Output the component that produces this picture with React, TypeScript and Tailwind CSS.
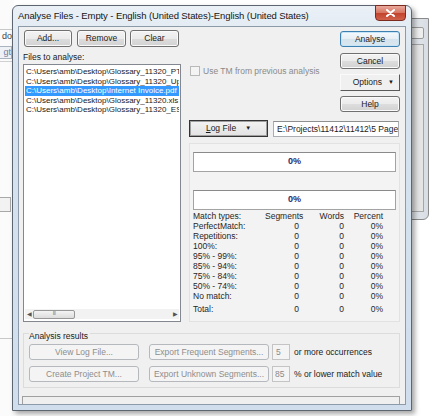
import React from "react";
import clsx from "clsx";

const font = "font-['Liberation_Sans',Arial,sans-serif]";

const files = [
  "C:\\Users\\amb\\Desktop\\Glossary_11320_PT.xlsx",
  "C:\\Users\\amb\\Desktop\\Glossary_11320_Upd.xlsx",
  "C:\\Users\\amb\\Desktop\\Internet Invoice.pdf",
  "C:\\Users\\amb\\Desktop\\Glossary_11320.xls",
  "C:\\Users\\amb\\Desktop\\Glossary_11320_ES.xlsx",
];

const rows = [
  "PerfectMatch:",
  "Repetitions:",
  "100%:",
  "95% - 99%:",
  "85% - 94%:",
  "75% - 84%:",
  "50% - 74%:",
  "No match:",
];

const Btn = ({
  children,
  className,
  disabled,
  primary,
}: {
  children: React.ReactNode;
  className?: string;
  disabled?: boolean;
  primary?: boolean;
}) => (
  <div
    className={clsx(
      "flex items-center justify-center rounded-[3px] border text-[8.5px] leading-none shrink-0",
      disabled
        ? "border-[#b5b9bd] bg-[#f4f4f4] text-[#8d8d8d]"
        : primary
          ? "border-[#3c7fb1] bg-[linear-gradient(#f4f9fc,#e6eff5_50%,#d5e3ec_50%,#d9e6ee)] text-[#1a1a1a] shadow-[inset_0_0_0_1px_#c6e4f7]"
          : "border-[#707070] bg-[linear-gradient(#f3f3f3,#ebebeb_50%,#dddddd_50%,#d2d2d2)] text-[#1a1a1a] shadow-[inset_0_0_0_1px_#fafafa]",
      className
    )}
  >
    {children}
  </div>
);

const Progress = () => (
  <div className="h-[20px] border border-[#a3a3a3] border-t-[#8a8a8a] bg-white flex items-center justify-center text-[9px] font-bold text-[#2b2b6b]">
    0%
  </div>
);

export default function App() {
  return (
    <div className={clsx("relative w-[433px] h-[416px] overflow-hidden bg-white text-[#1a1a1a]", font)}>
      {/* window behind, left */}
      <div className="absolute left-0 top-0 w-[14px] h-[416px] bg-[#fbfbfb] overflow-hidden">
        <div className="absolute left-0 top-[29px] w-[14px] border-t border-[#c8c8c8]" />
        <div className="absolute left-0 top-[31px] w-[12px] overflow-hidden text-[9px] leading-[11px] text-[#444] flex justify-end">
          <span className="shrink-0">do</span>
        </div>
        <div className="absolute left-0 top-[46px] w-[12px] h-[13px] border border-l-0 border-[#aab4c0] bg-[#eef2f7] overflow-hidden flex justify-end">
          <span className="shrink-0 text-[9px] leading-[11px] text-[#6a7fa3]">gt</span>
        </div>
        <div className="absolute left-0 top-[61px] w-[14px] border-t border-[#d0d0d0]" />
        <div className="absolute left-0 top-[197px] w-[11px] h-[15px] border border-l-0 border-[#a8a8a8] bg-[#f2f2f2]" />
        <div className="absolute left-0 top-[338px] w-[14px] border-t border-[#c8c8c8]" />
      </div>

      {/* window behind, right */}
      <div className="absolute left-[405px] top-[18px] w-[24px] h-[202px] rounded-br-[6px] border border-[#8a8a8a] bg-[linear-gradient(90deg,#e9edf1,#d7dde3)]">
        <div className="absolute left-[4px] top-[8px] w-[14px] h-[12px] rounded-[2px] border border-[#9a9a9a] bg-[#eeeeee]" />
        <div className="absolute left-[4px] top-[25px] w-[14px] h-[168px] border border-[#a6a6a6] bg-[#e4e4e4]" />
      </div>

      {/* dialog */}
      <div className="absolute left-[12px] top-[5px] w-[400px] h-[406px] rounded-t-[6px] border border-[#5d6670] bg-[linear-gradient(#eaf0f6,#d7e3ef_60px,#cfdded)] shadow-[3px_3px_5px_rgba(0,0,0,0.35)] flex flex-col">
        <div className="h-[20px] flex items-center pl-[5px] relative shrink-0">
          <span className="text-[9.5px] text-[#151515] tracking-[-0.1px]">
            Analyse Files - Empty - English (United States)-English (United States)
          </span>
          <div className="absolute right-[5px] top-[-1px] w-[31px] h-[16px] rounded-b-[4px] border border-[#7b2b20] bg-[linear-gradient(#e9a99c,#d5735f_50%,#c2412b_50%,#d0624b)] flex items-center justify-center">
            <svg width="9" height="8" viewBox="0 0 9 8">
              <path d="M1 1 L8 7 M8 1 L1 7" stroke="#fff" strokeWidth="2" strokeLinecap="round" />
            </svg>
          </div>
        </div>

        <div className="mx-[5px] mb-[5px] flex-1 border border-[#8d9aaa] bg-[#f0f0f0] pl-[4px] pr-[5px] pt-[3px] flex flex-col">
          <div className="flex">
            {/* left column */}
            <div className="w-[158px] flex flex-col">
              <div className="flex ml-[1px]">
                <Btn className="w-[48px] h-[17px]">Add...</Btn>
                <Btn className="w-[49px] h-[17px] ml-[5px]">Remove</Btn>
                <Btn className="w-[49px] h-[17px] ml-[4px]">Clear</Btn>
              </div>
              <div className="mt-[5px] h-[10px] text-[8.5px] leading-[10px]">Files to analyse:</div>
              <div className="mt-[2px] h-[258px] border border-[#828790] bg-white flex flex-col p-[1px]">
                <div className="flex-1 pt-[1px] overflow-hidden">
                  {files.map((f, i) => (
                    <div
                      key={f}
                      className={clsx(
                        "h-[9.5px] leading-[9.5px] text-[8px] whitespace-nowrap overflow-hidden pl-[1px]",
                        i === 2 ? "bg-[#3399ff] text-white" : "text-[#1a1a1a]"
                      )}
                    >
                      {f}
                    </div>
                  ))}
                </div>
                <div className="h-[10px] mb-[1px] flex items-center bg-[#f2f2f2]">
                  <span className="w-[8px] text-[6px] text-[#555] text-center">◀</span>
                  <div className="w-[42px] h-[9px] rounded-[2px] border border-[#979797] bg-[linear-gradient(#f4f4f4,#dcdcdc)] flex items-center justify-center text-[5px] text-[#777] tracking-[-0.5px]">
                    III
                  </div>
                  <div className="flex-1" />
                  <span className="w-[8px] text-[6px] text-[#555] text-center">▶</span>
                </div>
              </div>
            </div>

            {/* right column */}
            <div className="w-[211px] ml-[8px] flex flex-col">
              <div className="flex justify-between">
                <div className="pt-[36px] flex items-start">
                  <div className="ml-[1px] w-[10px] h-[10px] border border-[#b9b9b9] bg-[#f4f4f4]" />
                  <span className="ml-[3px] text-[8.5px] leading-[10px] text-[#8a8a8a]">
                    Use TM from previous analysis
                  </span>
                </div>
                <div className="w-[60px] pt-[1px] flex flex-col">
                  <Btn primary className="h-[16px]">Analyse</Btn>
                  <Btn className="h-[16px] mt-[6px]">Cancel</Btn>
                  <div className="h-[17px] mt-[5px] border border-t-[#fafafa] border-l-[#fafafa] border-r-[#5a5a5a] border-b-[#5a5a5a] bg-[#f0f0f0] flex items-center justify-end pr-[5px] text-[8.5px]">
                    Options
                    <span className="ml-[6px] text-[6px]">▼</span>
                  </div>
                  <Btn className="h-[16px] mt-[5px]">Help</Btn>
                </div>
              </div>

              <div className="mt-[8px] flex items-center">
                <div className="w-[79px] h-[17px] border border-[#333] shadow-[inset_0_0_0_1px_#a0a0a0] bg-[linear-gradient(#f3f3f3,#e2e2e2)] flex items-center justify-center text-[8.5px]">
                  <span>
                    <span className="underline">L</span>og File
                  </span>
                  <span className="ml-[9px] text-[6px]">▼</span>
                </div>
                <div className="ml-[5px] w-[126px] h-[16px] border border-[#abadb3] border-t-[#8e8f8f] bg-white text-[8.5px] leading-[14px] pl-[3px] whitespace-nowrap overflow-hidden">
                  E:\Projects\11412\11412\5 Pages\
                </div>
              </div>

              <div className="mt-[6px] h-[179px] border border-[#e2e2e2] bg-[#f3f3f3] px-[3px] pt-[8px]">
                <Progress />
                <div className="h-[18px]" />
                <Progress />
                <div className="mt-[1px] grid grid-cols-[72px_34px_45px_39px] text-[8.5px] leading-[10px] text-[#262626]">
                  <div>Match types:</div>
                  <div className="text-right">Segments</div>
                  <div className="text-right">Words</div>
                  <div className="text-right">Percent</div>
                  {rows.map((r) => (
                    <React.Fragment key={r}>
                      <div>{r}</div>
                      <div className="text-right">0</div>
                      <div className="text-right">0</div>
                      <div className="text-right">0%</div>
                    </React.Fragment>
                  ))}
                  <div className="mt-[3px]">Total:</div>
                  <div className="mt-[3px] text-right">0</div>
                  <div className="mt-[3px] text-right">0</div>
                  <div className="mt-[3px] text-right">0%</div>
                </div>
              </div>
            </div>
          </div>

          {/* analysis results */}
          <div className="relative mt-[11px] h-[55px] border border-[#dcdcdc] px-[5px] pt-[10px]">
            <span className="absolute left-[5px] top-[-3px] bg-[#f0f0f0] pr-[2px] text-[8.5px] leading-[10px]">
              Analysis results
            </span>
            <div className="flex items-center">
              <Btn disabled className="w-[110px] h-[16px]">View Log File...</Btn>
              <Btn disabled className="w-[120px] h-[16px] ml-[10px]">Export Frequent Segments...</Btn>
              <div className="ml-[3px] w-[18px] h-[16px] border border-[#c4c4c4] bg-[#f4f4f4] text-[8.5px] text-[#8a8a8a] leading-[14px] pl-[3px]">5</div>
              <span className="ml-[4px] text-[8.5px]">or more occurrences</span>
            </div>
            <div className="flex items-center mt-[6px]">
              <Btn disabled className="w-[110px] h-[16px]">Create Project TM...</Btn>
              <Btn disabled className="w-[120px] h-[16px] ml-[10px]">Export Unknown Segments...</Btn>
              <div className="ml-[3px] w-[18px] h-[16px] border border-[#c4c4c4] bg-[#f4f4f4] text-[8.5px] text-[#8a8a8a] leading-[14px] pl-[2px]">85</div>
              <span className="ml-[4px] text-[8.5px]">% or lower match value</span>
            </div>
          </div>

          {/* status bar */}
          <div className="mt-[8px] -ml-[1px] flex-1 border-t border-l border-r border-[#a0a0a0] bg-[#efefef]" />
        </div>
      </div>
    </div>
  );
}
